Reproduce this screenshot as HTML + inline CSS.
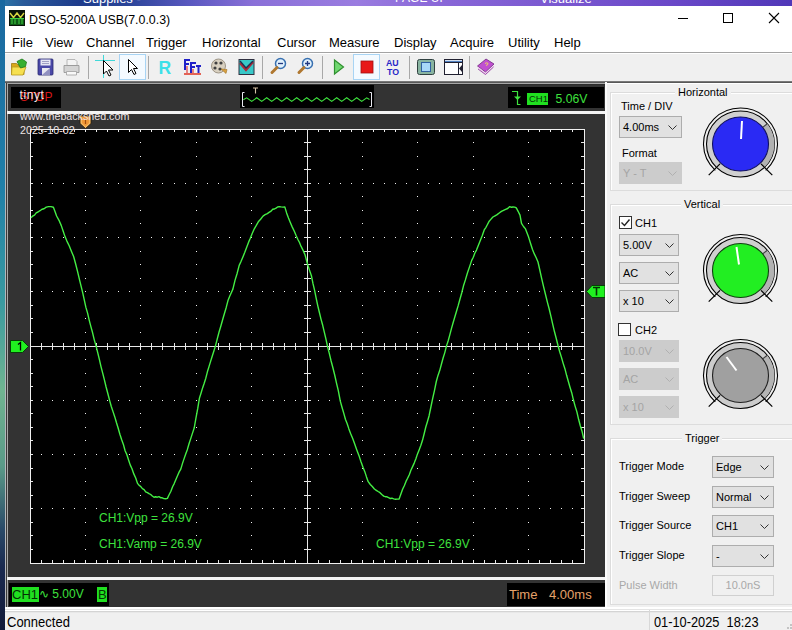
<!DOCTYPE html>
<html><head><meta charset="utf-8">
<style>
*{margin:0;padding:0;box-sizing:border-box}
html,body{width:792px;height:630px;overflow:hidden;background:#1d5f86;font-family:"Liberation Sans",sans-serif;font-size:12px;color:#000}
.a{position:absolute}
#top{left:0;top:0;width:792px;height:6px;background:linear-gradient(90deg,#2a78a8 0%,#2a5a9a 3%,#1e3c8c 10%,#2a4498 16%,#5a58c0 24%,#8a70d8 32%,#9a7ce0 45%,#8a68d8 55%,#7a58d0 70%,#6a48c8 85%,#5038b8 100%)}
#leftd{left:0;top:0;width:5px;height:630px;background:linear-gradient(180deg,#1a68a0 0%,#2080a8 30%,#3a9aa0 48%,#70b490 62%,#5a9a88 74%,#2a4a68 84%,#1a2a50 90%,#121a38 100%)}
#win{left:5px;top:6px;width:787px;height:624px;background:#fff}
.menu span{position:absolute;top:35px;font-size:13px;color:#000}
#tb{left:5px;top:52px;width:787px;height:30px;background:#f0f0f0;border-top:1px solid #a4a4a4;box-shadow:inset 0 1px 0 #fff}
#scope{left:5px;top:83px;width:600px;height:524px;background:#333333}
#rp{left:605px;top:83px;width:187px;height:525px;background:#f0f0f0;border-top:1px solid #fff}
#sb{left:5px;top:607px;width:787px;height:23px;background:#f0f0f0}
.gb{position:absolute;border:1px solid #dcdcdc;box-shadow:1px 1px 0 #fff inset}
.gl{position:absolute;background:#f0f0f0;padding:0 3px;font-size:11px;line-height:13px;color:#000}
.cb{position:absolute;background:#e1e1e1;border:1px solid #adadad;font-size:11px;color:#000;padding-left:3px;line-height:20px}
.cb.dis{background:#cccccc;border-color:#cccccc;color:#a4a4a4}
.chev{position:absolute;right:4px;top:8px;width:9px;height:5px}
.lbl{position:absolute;font-size:11px;line-height:13px;color:#000}
.g{color:#3ee23e}
</style></head><body>
<div class="a" id="top"></div>
<div class="a" id="leftd"></div>
<div class="a" id="win"></div>
<!-- desktop text peeks -->
<div class="a" style="left:83px;top:-9px;color:#fff;font-size:13px;line-height:15px">Supplies -</div>
<div class="a" style="left:395px;top:-9px;color:#fff;font-size:12px;line-height:15px">PAGE UP</div>
<div class="a" style="left:540px;top:-9px;color:#fff;font-size:13px;line-height:15px">Visualize</div>

<!-- title bar -->
<svg class="a" style="left:9px;top:10px" width="16" height="16" viewBox="0 0 16 16">
<rect x="0" y="0" width="16" height="16" fill="#0a140a"/>
<path d="M1 3 L4.5 7.5 L8 3 L11.5 7.5 L15 3" stroke="#d8d840" stroke-width="1.4" fill="none"/>
<rect x="1" y="8" width="14" height="7" fill="#0e5a16"/>
<path d="M1 8.5h14M3 9v5M6 9v5M10 9v5M13 9v5" stroke="#40d040" stroke-width="1" fill="none"/>
</svg>
<div class="a" style="left:29px;top:13px;font-size:12.4px;color:#000">DSO-5200A USB(7.0.0.3)</div>
<div class="a" style="left:678px;top:18px;width:10px;height:1px;background:#000"></div>
<div class="a" style="left:723px;top:13px;width:10px;height:10px;border:1px solid #000"></div>
<svg class="a" style="left:768px;top:12px" width="12" height="12" viewBox="0 0 12 12"><path d="M1 1L11 11M11 1L1 11" stroke="#000" stroke-width="1.1"/></svg>

<!-- menu -->
<div class="menu">
<span style="left:12px">File</span>
<span style="left:45px">View</span>
<span style="left:86px">Channel</span>
<span style="left:146px">Trigger</span>
<span style="left:202px">Horizontal</span>
<span style="left:277px">Cursor</span>
<span style="left:329px">Measure</span>
<span style="left:394px">Display</span>
<span style="left:450px">Acquire</span>
<span style="left:508px">Utility</span>
<span style="left:554px">Help</span>
</div>

<!-- toolbar -->
<div class="a" id="tb"></div>
<svg class="a" style="left:0;top:52px" width="792" height="30" viewBox="0 52 792 30">
<!-- open folder -->
<path d="M11.5 63.5h5l1.5 1.5h6v9.5h-12.5z" fill="#d8a818" stroke="#a07a10" stroke-width="0.8"/>
<path d="M12 67h14l-3 8h-11.5z" fill="#f6e050" stroke="#b89a20" stroke-width="0.8"/>
<path d="M17 61.5l5-2.5l4.5 3l-1 4.5l-5 1.5z" fill="#38b030" stroke="#1a7a18" stroke-width="0.8"/>
<!-- save -->
<rect x="38" y="59" width="15" height="16" rx="1" fill="#4a48a8" stroke="#2a2870" stroke-width="0.8"/>
<rect x="40.5" y="59.5" width="10" height="6" fill="#e6e6f4"/>
<path d="M42 61.5h7M42 63.5h7" stroke="#8080b0" stroke-width="0.7"/>
<rect x="42" y="68" width="8" height="7" fill="#e8e8f0"/>
<path d="M42 75l8-7v7z" fill="#9090c0"/>
<!-- print -->
<path d="M67 59.5h8l2 2v4h-10z" fill="#f4f4f4" stroke="#a8a8a8" stroke-width="0.8"/>
<path d="M64 65.5h15v7h-15z" fill="#d4d4d4" stroke="#909090" stroke-width="0.8"/>
<path d="M66.5 71.5h10v3.5h-10z" fill="#f8f8f8" stroke="#a0a0a0" stroke-width="0.8"/>
<!-- separator -->
<rect x="88" y="56" width="1" height="23" fill="#a8a8a8"/>
<!-- cursor crosshair -->
<path d="M95 60.5h20M103.5 55v23" stroke="#40d8d8" stroke-width="1"/>
<path d="M103.5 60.5v13.5l3-3l2.5 5l2-1l-2.5-5h4.5z" fill="#fff" stroke="#000" stroke-width="1"/>
<!-- selected pointer -->
<rect x="119.5" y="54.5" width="26" height="25" fill="#f4faff" stroke="#a8d4f4"/>
<path d="M128.5 59.5v13l3-3l2.5 5l2-1l-2.5-5h4z" fill="#fff" stroke="#000" stroke-width="1"/>
<rect x="148" y="56" width="1" height="23" fill="#a8a8a8"/>
<!-- R -->
<text x="158.5" y="73.5" font-family="Liberation Sans" font-weight="bold" font-size="17.5" fill="#3ce0e8">R</text>
<!-- FFT -->
<path d="M184 59h6v2h-4v2h3v2h-3v5h-2z" fill="#2020c8"/>
<path d="M190 62h6v2h-4v2h3v2h-3v5h-2z" fill="#2020c8"/>
<path d="M196 65h5v2h-1.5v6h-2v-6h-1.5z" fill="#2020c8"/>
<path d="M184 74h17" stroke="#e04030" stroke-width="1.6"/>
<path d="M187 66v7M193 69v4" stroke="#e04040" stroke-width="1.2"/>
<!-- reel -->
<circle cx="218.5" cy="66" r="7" fill="#d8d0c0" stroke="#8a8070" stroke-width="0.8"/>
<circle cx="216" cy="63" r="1.6" fill="#404040"/><circle cx="221" cy="63" r="1.6" fill="#404040"/><circle cx="215" cy="68" r="1.6" fill="#404040"/><circle cx="220" cy="69" r="1.6" fill="#404040"/>
<path d="M221 69l5 4.5l1-4z" fill="#d8a040" stroke="#a07020" stroke-width="0.6"/>
<!-- waveform screen -->
<rect x="239" y="59.5" width="15" height="15" fill="#38c8c8" stroke="#303040" stroke-width="1"/>
<path d="M240 63l6 7l7-8" stroke="#b02838" stroke-width="2.4" fill="none"/>
<path d="M240 61l6 7l7-7" stroke="#203050" stroke-width="1.4" fill="none"/>
<rect x="262" y="56" width="1" height="23" fill="#a8a8a8"/>
<!-- zoom out -->
<circle cx="280.5" cy="63.5" r="5" fill="#e0f0fc" stroke="#3870b0" stroke-width="1.5"/>
<path d="M278 63.5h5" stroke="#203880" stroke-width="1.3"/>
<path d="M277 67.5l-5 5" stroke="#b07830" stroke-width="3" stroke-linecap="round"/>
<circle cx="307.5" cy="63.5" r="5" fill="#e0f0fc" stroke="#3870b0" stroke-width="1.5"/>
<path d="M305 63.5h5M307.5 61v5" stroke="#203880" stroke-width="1.3"/>
<path d="M304 67.5l-5 5" stroke="#b07830" stroke-width="3" stroke-linecap="round"/>
<rect x="322" y="56" width="1" height="23" fill="#a8a8a8"/>
<!-- play -->
<path d="M334.5 60l9 7l-9 7z" fill="#70d870" stroke="#309030" stroke-width="1.2"/>
<!-- stop selected -->
<rect x="353.5" y="54.5" width="26" height="25" fill="#f4faff" stroke="#a8d4f4"/>
<rect x="361" y="61" width="12" height="12" fill="#e81818" stroke="#a01010" stroke-width="0.8"/>
<!-- AUTO -->
<text x="386" y="66" font-family="Liberation Sans" font-weight="bold" font-size="8.8" fill="#2828c8">AU</text>
<text x="387" y="74.5" font-family="Liberation Sans" font-weight="bold" font-size="8.8" fill="#2828c8">TO</text>
<rect x="409" y="56" width="1" height="23" fill="#a8a8a8"/>
<!-- fullscreen -->
<rect x="417.5" y="59.5" width="17" height="15" rx="2" fill="#88b4a0" stroke="#304040" stroke-width="1"/>
<rect x="421.5" y="62.5" width="9" height="9" fill="#a8d8f8" stroke="#3060a0" stroke-width="1"/>
<!-- panel -->
<rect x="444.5" y="59.5" width="18" height="15" fill="#fff" stroke="#202030" stroke-width="1"/>
<path d="M445 61.5h17" stroke="#5080c0" stroke-width="1.5"/>
<path d="M445 62.5h17M458.5 62.5v12" stroke="#202030" stroke-width="1"/>
<path d="M462 65l-3 3.5l3 3.5z" fill="#202030"/>
<rect x="469" y="56" width="1" height="23" fill="#a8a8a8"/>
<!-- book -->
<path d="M477.5 66l8.5-7l8 5l-8.5 8z" fill="#c050d0" stroke="#702880" stroke-width="0.8"/>
<path d="M478 67.5l7.5 6.5l8.5-8" stroke="#f0c8f0" stroke-width="1.2" fill="none"/>
<path d="M478 69l7.5 5.5l8-7.5" stroke="#8a3098" stroke-width="0.8" fill="none"/>
<path d="M485 63.5q2-1.5 3 0q0 1.5-2 2" stroke="#f0d060" stroke-width="1" fill="none"/>
</svg>

<div class="a" style="left:5px;top:81px;width:787px;height:1px;background:#787878"></div><div class="a" style="left:5px;top:82px;width:787px;height:1px;background:#585858"></div>

<!-- scope panel -->
<div class="a" id="scope"></div>
<div class="a" style="left:5px;top:83px;width:600px;height:1px;background:#a8a8a8"></div>
<div class="a" style="left:5px;top:84px;width:600px;height:1px;background:#2c2c2c"></div>
<div class="a" style="left:7px;top:83px;width:1px;height:524px;background:#a8a8a8"></div>
<div class="a" style="left:5px;top:83px;width:1px;height:525px;background:#b4b6ba"></div>
<div class="a" style="left:6px;top:83px;width:1px;height:525px;background:#3a3a3a"></div>

<!-- top black boxes -->
<div class="a" style="left:11px;top:87px;width:50px;height:21px;background:#000"></div>
<div class="a" style="left:20px;top:91px;font-size:12px;line-height:13px;color:#d81818">STOP</div>
<div class="a" style="left:19.5px;top:88px;font-size:12px;line-height:14px;color:#f4e4e4;letter-spacing:0.6px">tinyt</div>

<div class="a" style="left:240px;top:85px;width:134px;height:23px;background:#000"></div>
<svg class="a" style="left:240px;top:85px" width="134" height="23" viewBox="240 85 134 23">
<path d="M244.5 92.5h-2v14h2M369.5 92.5h2v14h-2" stroke="#e8e8f0" stroke-width="1" fill="none"/>
<path d="M243.3 99.8 L246.7 97.8 L251.7 101.4 L256.7 97.8 L261.7 101.4 L266.7 97.8 L271.7 101.4 L276.7 97.8 L281.7 101.4 L286.7 97.8 L291.7 101.4 L296.7 97.8 L301.7 101.4 L306.7 97.8 L311.7 101.4 L316.7 97.8 L321.7 101.4 L326.7 97.8 L331.7 101.4 L336.7 97.8 L341.7 101.4 L346.7 97.8 L351.7 101.4 L356.7 97.8 L361.7 101.4 L366.7 97.8 L369.5 99.5" stroke="#3ee23e" fill="none" stroke-width="1.1"/>
<path d="M253 88h5M255.5 88v5.5" stroke="#d8c4a8" stroke-width="1.1"/>
</svg>

<div class="a" style="left:508px;top:87px;width:96px;height:21px;background:#000"></div>
<svg class="a" style="left:508px;top:87px" width="20" height="21" viewBox="508 87 20 21">
<path d="M512 91.5h5.5v13h3" stroke="#3ee23e" stroke-width="1.2" fill="none"/>
<path d="M514 96.5h7l-3.5 3.5z" fill="#3ee23e"/>
</svg>
<div class="a" style="left:527px;top:93px;width:21px;height:12px;background:#20e020"></div>
<div class="a" style="left:529px;top:93px;font-size:9.5px;color:#063006;line-height:11px">CH1</div>
<div class="a g" style="left:555.5px;top:92px;font-size:12.2px;line-height:15px">5.06V</div>

<div class="a" style="left:7px;top:111px;width:598px;height:3px;background:#f4f4f4"></div>

<!-- grid -->
<div class="a" style="left:30px;top:129px;width:555px;height:435px;background:#000"></div>
<svg class="a" style="left:0;top:0" width="792" height="630" viewBox="0 0 792 630">
<path d="M85 142h1v1h-1zM85 156h1v1h-1zM85 169h1v1h-1zM85 183h1v1h-1zM85 196h1v1h-1zM85 210h1v1h-1zM85 223h1v1h-1zM85 237h1v1h-1zM85 251h1v1h-1zM85 264h1v1h-1zM85 278h1v1h-1zM85 291h1v1h-1zM85 305h1v1h-1zM85 318h1v1h-1zM85 332h1v1h-1zM85 346h1v1h-1zM85 359h1v1h-1zM85 373h1v1h-1zM85 386h1v1h-1zM85 400h1v1h-1zM85 413h1v1h-1zM85 427h1v1h-1zM85 440h1v1h-1zM85 454h1v1h-1zM85 468h1v1h-1zM85 481h1v1h-1zM85 495h1v1h-1zM85 508h1v1h-1zM85 522h1v1h-1zM85 535h1v1h-1zM85 549h1v1h-1zM140 142h1v1h-1zM140 156h1v1h-1zM140 169h1v1h-1zM140 183h1v1h-1zM140 196h1v1h-1zM140 210h1v1h-1zM140 223h1v1h-1zM140 237h1v1h-1zM140 251h1v1h-1zM140 264h1v1h-1zM140 278h1v1h-1zM140 291h1v1h-1zM140 305h1v1h-1zM140 318h1v1h-1zM140 332h1v1h-1zM140 346h1v1h-1zM140 359h1v1h-1zM140 373h1v1h-1zM140 386h1v1h-1zM140 400h1v1h-1zM140 413h1v1h-1zM140 427h1v1h-1zM140 440h1v1h-1zM140 454h1v1h-1zM140 468h1v1h-1zM140 481h1v1h-1zM140 495h1v1h-1zM140 508h1v1h-1zM140 522h1v1h-1zM140 535h1v1h-1zM140 549h1v1h-1zM196 142h1v1h-1zM196 156h1v1h-1zM196 169h1v1h-1zM196 183h1v1h-1zM196 196h1v1h-1zM196 210h1v1h-1zM196 223h1v1h-1zM196 237h1v1h-1zM196 251h1v1h-1zM196 264h1v1h-1zM196 278h1v1h-1zM196 291h1v1h-1zM196 305h1v1h-1zM196 318h1v1h-1zM196 332h1v1h-1zM196 346h1v1h-1zM196 359h1v1h-1zM196 373h1v1h-1zM196 386h1v1h-1zM196 400h1v1h-1zM196 413h1v1h-1zM196 427h1v1h-1zM196 440h1v1h-1zM196 454h1v1h-1zM196 468h1v1h-1zM196 481h1v1h-1zM196 495h1v1h-1zM196 508h1v1h-1zM196 522h1v1h-1zM196 535h1v1h-1zM196 549h1v1h-1zM251 142h1v1h-1zM251 156h1v1h-1zM251 169h1v1h-1zM251 183h1v1h-1zM251 196h1v1h-1zM251 210h1v1h-1zM251 223h1v1h-1zM251 237h1v1h-1zM251 251h1v1h-1zM251 264h1v1h-1zM251 278h1v1h-1zM251 291h1v1h-1zM251 305h1v1h-1zM251 318h1v1h-1zM251 332h1v1h-1zM251 346h1v1h-1zM251 359h1v1h-1zM251 373h1v1h-1zM251 386h1v1h-1zM251 400h1v1h-1zM251 413h1v1h-1zM251 427h1v1h-1zM251 440h1v1h-1zM251 454h1v1h-1zM251 468h1v1h-1zM251 481h1v1h-1zM251 495h1v1h-1zM251 508h1v1h-1zM251 522h1v1h-1zM251 535h1v1h-1zM251 549h1v1h-1zM362 142h1v1h-1zM362 156h1v1h-1zM362 169h1v1h-1zM362 183h1v1h-1zM362 196h1v1h-1zM362 210h1v1h-1zM362 223h1v1h-1zM362 237h1v1h-1zM362 251h1v1h-1zM362 264h1v1h-1zM362 278h1v1h-1zM362 291h1v1h-1zM362 305h1v1h-1zM362 318h1v1h-1zM362 332h1v1h-1zM362 346h1v1h-1zM362 359h1v1h-1zM362 373h1v1h-1zM362 386h1v1h-1zM362 400h1v1h-1zM362 413h1v1h-1zM362 427h1v1h-1zM362 440h1v1h-1zM362 454h1v1h-1zM362 468h1v1h-1zM362 481h1v1h-1zM362 495h1v1h-1zM362 508h1v1h-1zM362 522h1v1h-1zM362 535h1v1h-1zM362 549h1v1h-1zM417 142h1v1h-1zM417 156h1v1h-1zM417 169h1v1h-1zM417 183h1v1h-1zM417 196h1v1h-1zM417 210h1v1h-1zM417 223h1v1h-1zM417 237h1v1h-1zM417 251h1v1h-1zM417 264h1v1h-1zM417 278h1v1h-1zM417 291h1v1h-1zM417 305h1v1h-1zM417 318h1v1h-1zM417 332h1v1h-1zM417 346h1v1h-1zM417 359h1v1h-1zM417 373h1v1h-1zM417 386h1v1h-1zM417 400h1v1h-1zM417 413h1v1h-1zM417 427h1v1h-1zM417 440h1v1h-1zM417 454h1v1h-1zM417 468h1v1h-1zM417 481h1v1h-1zM417 495h1v1h-1zM417 508h1v1h-1zM417 522h1v1h-1zM417 535h1v1h-1zM417 549h1v1h-1zM473 142h1v1h-1zM473 156h1v1h-1zM473 169h1v1h-1zM473 183h1v1h-1zM473 196h1v1h-1zM473 210h1v1h-1zM473 223h1v1h-1zM473 237h1v1h-1zM473 251h1v1h-1zM473 264h1v1h-1zM473 278h1v1h-1zM473 291h1v1h-1zM473 305h1v1h-1zM473 318h1v1h-1zM473 332h1v1h-1zM473 346h1v1h-1zM473 359h1v1h-1zM473 373h1v1h-1zM473 386h1v1h-1zM473 400h1v1h-1zM473 413h1v1h-1zM473 427h1v1h-1zM473 440h1v1h-1zM473 454h1v1h-1zM473 468h1v1h-1zM473 481h1v1h-1zM473 495h1v1h-1zM473 508h1v1h-1zM473 522h1v1h-1zM473 535h1v1h-1zM473 549h1v1h-1zM528 142h1v1h-1zM528 156h1v1h-1zM528 169h1v1h-1zM528 183h1v1h-1zM528 196h1v1h-1zM528 210h1v1h-1zM528 223h1v1h-1zM528 237h1v1h-1zM528 251h1v1h-1zM528 264h1v1h-1zM528 278h1v1h-1zM528 291h1v1h-1zM528 305h1v1h-1zM528 318h1v1h-1zM528 332h1v1h-1zM528 346h1v1h-1zM528 359h1v1h-1zM528 373h1v1h-1zM528 386h1v1h-1zM528 400h1v1h-1zM528 413h1v1h-1zM528 427h1v1h-1zM528 440h1v1h-1zM528 454h1v1h-1zM528 468h1v1h-1zM528 481h1v1h-1zM528 495h1v1h-1zM528 508h1v1h-1zM528 522h1v1h-1zM528 535h1v1h-1zM528 549h1v1h-1zM41 183h1v1h-1zM52 183h1v1h-1zM63 183h1v1h-1zM74 183h1v1h-1zM85 183h1v1h-1zM96 183h1v1h-1zM107 183h1v1h-1zM118 183h1v1h-1zM129 183h1v1h-1zM140 183h1v1h-1zM151 183h1v1h-1zM162 183h1v1h-1zM174 183h1v1h-1zM185 183h1v1h-1zM196 183h1v1h-1zM207 183h1v1h-1zM218 183h1v1h-1zM229 183h1v1h-1zM240 183h1v1h-1zM251 183h1v1h-1zM262 183h1v1h-1zM273 183h1v1h-1zM284 183h1v1h-1zM295 183h1v1h-1zM307 183h1v1h-1zM318 183h1v1h-1zM329 183h1v1h-1zM340 183h1v1h-1zM351 183h1v1h-1zM362 183h1v1h-1zM373 183h1v1h-1zM384 183h1v1h-1zM395 183h1v1h-1zM406 183h1v1h-1zM417 183h1v1h-1zM428 183h1v1h-1zM439 183h1v1h-1zM451 183h1v1h-1zM462 183h1v1h-1zM473 183h1v1h-1zM484 183h1v1h-1zM495 183h1v1h-1zM506 183h1v1h-1zM517 183h1v1h-1zM528 183h1v1h-1zM539 183h1v1h-1zM550 183h1v1h-1zM561 183h1v1h-1zM572 183h1v1h-1zM41 237h1v1h-1zM52 237h1v1h-1zM63 237h1v1h-1zM74 237h1v1h-1zM85 237h1v1h-1zM96 237h1v1h-1zM107 237h1v1h-1zM118 237h1v1h-1zM129 237h1v1h-1zM140 237h1v1h-1zM151 237h1v1h-1zM162 237h1v1h-1zM174 237h1v1h-1zM185 237h1v1h-1zM196 237h1v1h-1zM207 237h1v1h-1zM218 237h1v1h-1zM229 237h1v1h-1zM240 237h1v1h-1zM251 237h1v1h-1zM262 237h1v1h-1zM273 237h1v1h-1zM284 237h1v1h-1zM295 237h1v1h-1zM307 237h1v1h-1zM318 237h1v1h-1zM329 237h1v1h-1zM340 237h1v1h-1zM351 237h1v1h-1zM362 237h1v1h-1zM373 237h1v1h-1zM384 237h1v1h-1zM395 237h1v1h-1zM406 237h1v1h-1zM417 237h1v1h-1zM428 237h1v1h-1zM439 237h1v1h-1zM451 237h1v1h-1zM462 237h1v1h-1zM473 237h1v1h-1zM484 237h1v1h-1zM495 237h1v1h-1zM506 237h1v1h-1zM517 237h1v1h-1zM528 237h1v1h-1zM539 237h1v1h-1zM550 237h1v1h-1zM561 237h1v1h-1zM572 237h1v1h-1zM41 291h1v1h-1zM52 291h1v1h-1zM63 291h1v1h-1zM74 291h1v1h-1zM85 291h1v1h-1zM96 291h1v1h-1zM107 291h1v1h-1zM118 291h1v1h-1zM129 291h1v1h-1zM140 291h1v1h-1zM151 291h1v1h-1zM162 291h1v1h-1zM174 291h1v1h-1zM185 291h1v1h-1zM196 291h1v1h-1zM207 291h1v1h-1zM218 291h1v1h-1zM229 291h1v1h-1zM240 291h1v1h-1zM251 291h1v1h-1zM262 291h1v1h-1zM273 291h1v1h-1zM284 291h1v1h-1zM295 291h1v1h-1zM307 291h1v1h-1zM318 291h1v1h-1zM329 291h1v1h-1zM340 291h1v1h-1zM351 291h1v1h-1zM362 291h1v1h-1zM373 291h1v1h-1zM384 291h1v1h-1zM395 291h1v1h-1zM406 291h1v1h-1zM417 291h1v1h-1zM428 291h1v1h-1zM439 291h1v1h-1zM451 291h1v1h-1zM462 291h1v1h-1zM473 291h1v1h-1zM484 291h1v1h-1zM495 291h1v1h-1zM506 291h1v1h-1zM517 291h1v1h-1zM528 291h1v1h-1zM539 291h1v1h-1zM550 291h1v1h-1zM561 291h1v1h-1zM572 291h1v1h-1zM41 400h1v1h-1zM52 400h1v1h-1zM63 400h1v1h-1zM74 400h1v1h-1zM85 400h1v1h-1zM96 400h1v1h-1zM107 400h1v1h-1zM118 400h1v1h-1zM129 400h1v1h-1zM140 400h1v1h-1zM151 400h1v1h-1zM162 400h1v1h-1zM174 400h1v1h-1zM185 400h1v1h-1zM196 400h1v1h-1zM207 400h1v1h-1zM218 400h1v1h-1zM229 400h1v1h-1zM240 400h1v1h-1zM251 400h1v1h-1zM262 400h1v1h-1zM273 400h1v1h-1zM284 400h1v1h-1zM295 400h1v1h-1zM307 400h1v1h-1zM318 400h1v1h-1zM329 400h1v1h-1zM340 400h1v1h-1zM351 400h1v1h-1zM362 400h1v1h-1zM373 400h1v1h-1zM384 400h1v1h-1zM395 400h1v1h-1zM406 400h1v1h-1zM417 400h1v1h-1zM428 400h1v1h-1zM439 400h1v1h-1zM451 400h1v1h-1zM462 400h1v1h-1zM473 400h1v1h-1zM484 400h1v1h-1zM495 400h1v1h-1zM506 400h1v1h-1zM517 400h1v1h-1zM528 400h1v1h-1zM539 400h1v1h-1zM550 400h1v1h-1zM561 400h1v1h-1zM572 400h1v1h-1zM41 454h1v1h-1zM52 454h1v1h-1zM63 454h1v1h-1zM74 454h1v1h-1zM85 454h1v1h-1zM96 454h1v1h-1zM107 454h1v1h-1zM118 454h1v1h-1zM129 454h1v1h-1zM140 454h1v1h-1zM151 454h1v1h-1zM162 454h1v1h-1zM174 454h1v1h-1zM185 454h1v1h-1zM196 454h1v1h-1zM207 454h1v1h-1zM218 454h1v1h-1zM229 454h1v1h-1zM240 454h1v1h-1zM251 454h1v1h-1zM262 454h1v1h-1zM273 454h1v1h-1zM284 454h1v1h-1zM295 454h1v1h-1zM307 454h1v1h-1zM318 454h1v1h-1zM329 454h1v1h-1zM340 454h1v1h-1zM351 454h1v1h-1zM362 454h1v1h-1zM373 454h1v1h-1zM384 454h1v1h-1zM395 454h1v1h-1zM406 454h1v1h-1zM417 454h1v1h-1zM428 454h1v1h-1zM439 454h1v1h-1zM451 454h1v1h-1zM462 454h1v1h-1zM473 454h1v1h-1zM484 454h1v1h-1zM495 454h1v1h-1zM506 454h1v1h-1zM517 454h1v1h-1zM528 454h1v1h-1zM539 454h1v1h-1zM550 454h1v1h-1zM561 454h1v1h-1zM572 454h1v1h-1zM41 508h1v1h-1zM52 508h1v1h-1zM63 508h1v1h-1zM74 508h1v1h-1zM85 508h1v1h-1zM96 508h1v1h-1zM107 508h1v1h-1zM118 508h1v1h-1zM129 508h1v1h-1zM140 508h1v1h-1zM151 508h1v1h-1zM162 508h1v1h-1zM174 508h1v1h-1zM185 508h1v1h-1zM196 508h1v1h-1zM207 508h1v1h-1zM218 508h1v1h-1zM229 508h1v1h-1zM240 508h1v1h-1zM251 508h1v1h-1zM262 508h1v1h-1zM273 508h1v1h-1zM284 508h1v1h-1zM295 508h1v1h-1zM307 508h1v1h-1zM318 508h1v1h-1zM329 508h1v1h-1zM340 508h1v1h-1zM351 508h1v1h-1zM362 508h1v1h-1zM373 508h1v1h-1zM384 508h1v1h-1zM395 508h1v1h-1zM406 508h1v1h-1zM417 508h1v1h-1zM428 508h1v1h-1zM439 508h1v1h-1zM451 508h1v1h-1zM462 508h1v1h-1zM473 508h1v1h-1zM484 508h1v1h-1zM495 508h1v1h-1zM506 508h1v1h-1zM517 508h1v1h-1zM528 508h1v1h-1zM539 508h1v1h-1zM550 508h1v1h-1zM561 508h1v1h-1zM572 508h1v1h-1z" fill="#f0f0f0"/>
<path d="M41.5 129v3M41.5 563v-3M41.5 343v7M52.5 129v3M52.5 563v-3M52.5 343v7M63.5 129v3M63.5 563v-3M63.5 343v7M74.5 129v3M74.5 563v-3M74.5 343v7M85.5 129v3M85.5 563v-3M85.5 343v7M96.5 129v3M96.5 563v-3M96.5 343v7M107.5 129v3M107.5 563v-3M107.5 343v7M118.5 129v3M118.5 563v-3M118.5 343v7M129.5 129v3M129.5 563v-3M129.5 343v7M140.5 129v3M140.5 563v-3M140.5 343v7M151.5 129v3M151.5 563v-3M151.5 343v7M162.5 129v3M162.5 563v-3M162.5 343v7M174.5 129v3M174.5 563v-3M174.5 343v7M185.5 129v3M185.5 563v-3M185.5 343v7M196.5 129v3M196.5 563v-3M196.5 343v7M207.5 129v3M207.5 563v-3M207.5 343v7M218.5 129v3M218.5 563v-3M218.5 343v7M229.5 129v3M229.5 563v-3M229.5 343v7M240.5 129v3M240.5 563v-3M240.5 343v7M251.5 129v3M251.5 563v-3M251.5 343v7M262.5 129v3M262.5 563v-3M262.5 343v7M273.5 129v3M273.5 563v-3M273.5 343v7M284.5 129v3M284.5 563v-3M284.5 343v7M295.5 129v3M295.5 563v-3M295.5 343v7M307.5 129v3M307.5 563v-3M307.5 343v7M318.5 129v3M318.5 563v-3M318.5 343v7M329.5 129v3M329.5 563v-3M329.5 343v7M340.5 129v3M340.5 563v-3M340.5 343v7M351.5 129v3M351.5 563v-3M351.5 343v7M362.5 129v3M362.5 563v-3M362.5 343v7M373.5 129v3M373.5 563v-3M373.5 343v7M384.5 129v3M384.5 563v-3M384.5 343v7M395.5 129v3M395.5 563v-3M395.5 343v7M406.5 129v3M406.5 563v-3M406.5 343v7M417.5 129v3M417.5 563v-3M417.5 343v7M428.5 129v3M428.5 563v-3M428.5 343v7M439.5 129v3M439.5 563v-3M439.5 343v7M451.5 129v3M451.5 563v-3M451.5 343v7M462.5 129v3M462.5 563v-3M462.5 343v7M473.5 129v3M473.5 563v-3M473.5 343v7M484.5 129v3M484.5 563v-3M484.5 343v7M495.5 129v3M495.5 563v-3M495.5 343v7M506.5 129v3M506.5 563v-3M506.5 343v7M517.5 129v3M517.5 563v-3M517.5 343v7M528.5 129v3M528.5 563v-3M528.5 343v7M539.5 129v3M539.5 563v-3M539.5 343v7M550.5 129v3M550.5 563v-3M550.5 343v7M561.5 129v3M561.5 563v-3M561.5 343v7M572.5 129v3M572.5 563v-3M572.5 343v7M30 142.5h3M584 142.5h-3M304 142.5h7M30 156.5h3M584 156.5h-3M304 156.5h7M30 169.5h3M584 169.5h-3M304 169.5h7M30 183.5h3M584 183.5h-3M304 183.5h7M30 196.5h3M584 196.5h-3M304 196.5h7M30 210.5h3M584 210.5h-3M304 210.5h7M30 223.5h3M584 223.5h-3M304 223.5h7M30 237.5h3M584 237.5h-3M304 237.5h7M30 251.5h3M584 251.5h-3M304 251.5h7M30 264.5h3M584 264.5h-3M304 264.5h7M30 278.5h3M584 278.5h-3M304 278.5h7M30 291.5h3M584 291.5h-3M304 291.5h7M30 305.5h3M584 305.5h-3M304 305.5h7M30 318.5h3M584 318.5h-3M304 318.5h7M30 332.5h3M584 332.5h-3M304 332.5h7M30 346.5h3M584 346.5h-3M304 346.5h7M30 359.5h3M584 359.5h-3M304 359.5h7M30 373.5h3M584 373.5h-3M304 373.5h7M30 386.5h3M584 386.5h-3M304 386.5h7M30 400.5h3M584 400.5h-3M304 400.5h7M30 413.5h3M584 413.5h-3M304 413.5h7M30 427.5h3M584 427.5h-3M304 427.5h7M30 440.5h3M584 440.5h-3M304 440.5h7M30 454.5h3M584 454.5h-3M304 454.5h7M30 468.5h3M584 468.5h-3M304 468.5h7M30 481.5h3M584 481.5h-3M304 481.5h7M30 495.5h3M584 495.5h-3M304 495.5h7M30 508.5h3M584 508.5h-3M304 508.5h7M30 522.5h3M584 522.5h-3M304 522.5h7M30 535.5h3M584 535.5h-3M304 535.5h7M30 549.5h3M584 549.5h-3M304 549.5h7" stroke="#e8e8e8" stroke-width="1" fill="none"/>
<rect x="30.5" y="129.5" width="554" height="434" fill="none" stroke="#f0f0f0" stroke-width="1"/>
<path d="M307.5 129V563M30 346.5H584" stroke="#e8e8e8" stroke-width="1"/>
<path d="M31.0 217.8 L32.8 216.0 L34.5 215.2 L36.2 212.9 L38.0 212.0 L40.0 210.7 L42.0 209.2 L44.0 208.7 L46.3 207.1 L48.6 206.6 L51.0 206.6 L53.4 207.2 L55.0 211.6 L56.6 216.0 L59.0 220.3 L61.3 225.6 L63.2 231.2 L65.0 236.6 L66.9 241.1 L69.3 246.0 L71.7 251.9 L73.7 256.7 L75.6 263.8 L77.6 271.7 L79.6 280.2 L81.2 286.6 L82.8 293.2 L85.9 307.4 L87.6 313.1 L89.2 320.1 L90.9 326.7 L92.6 332.8 L94.2 339.6 L95.9 345.4 L97.6 352.2 L99.3 359.2 L101.0 366.6 L102.7 373.1 L104.4 379.8 L106.1 387.0 L107.9 393.7 L109.6 400.3 L111.3 406.5 L113.1 411.9 L114.8 416.9 L116.5 422.8 L118.2 428.2 L119.9 434.2 L121.6 439.5 L123.4 444.4 L125.1 450.8 L126.8 454.5 L128.5 459.7 L130.2 464.9 L132.0 468.8 L133.8 473.9 L135.7 478.0 L137.5 483.4 L139.1 485.2 L140.8 486.6 L142.4 488.7 L144.1 489.6 L145.7 491.8 L147.4 492.6 L149.0 493.6 L150.7 494.5 L152.3 496.0 L154.0 497.2 L155.6 496.8 L157.3 497.2 L158.9 496.6 L160.6 497.7 L162.2 497.8 L163.9 498.6 L165.7 498.8 L167.4 498.4 L169.1 494.8 L170.9 491.3 L172.6 486.7 L174.2 483.6 L175.9 479.5 L177.5 475.7 L179.2 471.9 L180.8 469.1 L182.5 463.4 L184.1 458.6 L185.8 453.8 L187.4 449.4 L189.1 443.5 L190.8 438.4 L192.5 433.1 L194.2 428.0 L195.9 418.3 L197.7 408.7 L199.4 398.3 L201.0 393.2 L202.6 387.9 L204.2 383.3 L205.8 378.2 L207.4 371.8 L209.0 366.6 L210.6 361.4 L212.2 356.2 L213.8 351.2 L215.4 346.1 L217.2 339.1 L219.0 332.2 L220.8 326.2 L222.7 319.5 L224.5 313.2 L226.3 307.2 L228.1 300.2 L229.7 296.3 L231.3 292.8 L232.9 289.1 L235.0 280.4 L237.1 273.5 L239.2 265.4 L241.1 261.3 L242.9 257.0 L244.8 252.3 L246.6 247.5 L248.5 242.4 L250.3 238.3 L252.3 233.2 L254.3 228.8 L256.3 225.4 L258.3 221.8 L260.6 219.2 L263.0 216.1 L265.1 214.7 L267.3 213.6 L269.4 212.2 L271.1 211.1 L272.7 209.3 L274.4 209.0 L276.0 208.1 L277.6 207.0 L279.2 206.6 L281.1 206.9 L282.9 207.1 L284.8 206.9 L286.6 212.9 L288.5 218.1 L290.3 222.5 L292.3 227.1 L294.3 231.3 L296.3 236.0 L297.9 239.5 L299.5 242.5 L301.1 246.4 L303.1 250.4 L305.1 255.0 L307.5 264.1 L309.4 269.9 L311.4 275.7 L313.0 283.7 L314.6 290.4 L316.2 298.4 L317.8 305.8 L319.4 312.5 L321.0 319.1 L322.7 325.3 L324.3 332.2 L325.9 338.8 L327.5 346.4 L329.3 353.4 L331.1 361.0 L332.9 367.8 L334.7 375.0 L336.5 383.1 L338.3 390.6 L340.3 401.1 L342.0 407.2 L343.8 413.4 L345.5 419.5 L347.2 423.7 L348.9 428.9 L350.6 433.5 L352.7 438.6 L354.7 444.1 L356.8 449.9 L358.9 455.4 L360.9 461.5 L363.0 467.3 L364.7 471.4 L366.5 476.9 L368.2 481.7 L370.3 484.5 L372.3 486.5 L374.4 489.0 L376.3 490.3 L378.1 491.5 L380.0 492.7 L381.8 494.5 L383.7 496.1 L385.3 496.7 L387.0 496.8 L388.6 497.7 L390.3 498.5 L391.9 498.2 L393.7 498.9 L395.5 499.2 L397.3 499.1 L399.1 499.0 L400.8 494.2 L402.6 489.3 L404.3 485.7 L406.0 481.4 L407.6 478.3 L409.3 474.8 L410.9 470.3 L412.6 466.6 L414.2 463.1 L415.9 458.7 L417.5 453.9 L419.2 449.7 L420.8 445.5 L422.5 440.3 L424.1 434.0 L425.8 427.0 L427.4 421.7 L429.1 415.7 L430.9 407.0 L432.7 398.4 L434.5 390.3 L436.3 381.5 L438.0 375.4 L439.7 370.6 L441.4 364.2 L443.1 358.0 L444.8 352.6 L446.5 345.9 L448.2 340.7 L449.8 334.9 L451.5 328.4 L453.1 322.7 L454.8 317.0 L456.5 311.2 L458.1 305.9 L459.8 299.7 L461.7 293.0 L463.5 285.8 L465.4 279.9 L467.5 272.8 L469.6 266.6 L471.7 260.4 L473.3 257.3 L474.9 253.0 L476.5 250.1 L478.1 246.0 L480.2 240.8 L482.3 235.5 L484.4 229.6 L486.0 227.3 L487.6 224.2 L489.2 221.2 L490.8 219.4 L492.9 217.0 L495.0 215.8 L497.1 214.6 L499.2 213.0 L501.4 211.4 L503.5 210.3 L505.6 209.3 L507.7 208.5 L509.8 206.6 L511.4 207.3 L513.0 207.0 L514.7 207.1 L516.3 207.9 L518.1 211.3 L520.0 215.1 L521.5 223.3 L523.5 226.5 L525.5 228.9 L528.6 237.1 L530.5 243.3 L532.5 249.5 L534.3 253.9 L536.2 257.8 L538.0 262.0 L539.8 270.0 L541.7 278.6 L543.5 286.3 L545.5 294.5 L547.5 302.6 L549.2 309.0 L551.0 316.7 L552.8 324.6 L554.5 331.8 L556.2 338.2 L558.0 345.5 L559.7 351.7 L561.4 357.1 L563.1 363.1 L564.9 368.7 L566.6 375.3 L568.3 381.3 L570.0 387.2 L571.7 392.7 L573.4 399.8 L575.1 406.1 L576.9 411.9 L578.6 419.3 L580.3 425.8 L582.0 431.2 L583.7 438.6" stroke="#44ee44" stroke-width="1.4" fill="none" stroke-linejoin="round"/>
</svg>

<svg class="a" style="left:79px;top:115px" width="13" height="14" viewBox="0 0 13 14"><path d="M1 1h11v7.5l-5.5 5l-5.5-5z" fill="#f4b860" stroke="#2a1a08" stroke-width="0.8"/><path d="M3 2h7v6l-3.5 3.5l-3.5-3.5z" fill="#f09838"/><path d="M6.5 4v5" stroke="#a05010" stroke-width="1.2"/></svg>
<div class="a" style="left:20px;top:110px;font-size:10.7px;color:#eee4e4">www.thebackshed.com</div>
<div class="a" style="left:20px;top:124px;font-size:10.7px;color:#eee4e4">2025-10-02</div>


<svg class="a" style="left:10px;top:340px" width="20" height="13" viewBox="0 0 20 13"><path d="M0.5 0.5h12l6 6l-6 6h-12z" fill="#20f020" stroke="#064006"/><path d="M10.5 10.5v-8l-2.5 2" stroke="#000" stroke-width="1.3" fill="none"/></svg>
<svg class="a" style="left:586px;top:285px" width="19" height="13" viewBox="0 0 19 13"><path d="M19 0.5h-13l-5.5 6l5.5 6h13z" fill="#20f020" stroke="#064006"/><path d="M7 2.5h7M10.5 2.5v8" stroke="#053005" stroke-width="1.6" fill="none"/></svg>

<div class="a g" style="left:99px;top:510.5px;font-size:12px">CH1:Vpp = 26.9V</div>
<div class="a g" style="left:99px;top:536.5px;font-size:12px">CH1:Vamp = 26.9V</div>
<div class="a g" style="left:376px;top:536.5px;font-size:12px">CH1:Vpp = 26.9V</div>

<div class="a" style="left:7px;top:577px;width:598px;height:3px;background:#f4f4f4"></div>
<div class="a" style="left:9px;top:583px;width:100px;height:23px;background:#000"></div>
<div class="a" style="left:12px;top:587px;width:27px;height:15px;background:#20e020"></div>
<div class="a" style="left:12px;top:587px;font-size:13px;color:#053005;line-height:15px">CH1</div>
<div class="a g" style="left:39px;top:587px;font-size:12px;line-height:15px">∿ 5.00V</div>
<div class="a" style="left:97px;top:587px;width:10px;height:15px;background:#20e020"></div>
<div class="a" style="left:98px;top:587px;font-size:13px;color:#053005;line-height:15px">B</div>
<div class="a" style="left:507px;top:583px;width:98px;height:23px;background:#000"></div>
<div class="a" style="left:509px;top:587px;font-size:13px;color:#e6a26a;line-height:15px">Time</div>
<div class="a" style="left:549px;top:587px;font-size:13px;color:#e6a26a;line-height:15px">4.00ms</div>

<!-- right panel -->
<div class="a" id="rp"></div>
<div class="a" style="left:605px;top:82px;width:2px;height:526px;background:#fcfcfc"></div>
<div class="gb" style="left:610px;top:92px;width:190px;height:99px"></div>
<div class="gl" style="left:675px;top:86px">Horizontal</div>
<div class="lbl" style="left:621px;top:100px">Time / DIV</div>
<div class="cb" style="left:619px;top:116px;width:63px;height:22px">4.00ms<svg class="chev" viewBox="0 0 9 5"><path d="M0.5 0.5l4 4l4-4" stroke="#333" fill="none"/></svg></div>
<div class="lbl" style="left:622px;top:147px">Format</div>
<div class="cb dis" style="left:619px;top:162px;width:63px;height:22px">Y - T<svg class="chev" viewBox="0 0 9 5"><path d="M0.5 0.5l4 4l4-4" stroke="#b0b0b0" fill="none"/></svg></div>

<div class="gb" style="left:610px;top:204px;width:190px;height:221px"></div>
<div class="gl" style="left:681px;top:198px">Vertical</div>
<div class="a" style="left:619px;top:216px;width:13px;height:13px;border:1px solid #333;background:#fff"></div>
<svg class="a" style="left:619px;top:216px" width="13" height="13" viewBox="0 0 13 13"><path d="M2.5 6.5l3 3l5-6" stroke="#222" stroke-width="1.4" fill="none"/></svg>
<div class="lbl" style="left:635px;top:217px">CH1</div>
<div class="cb" style="left:619px;top:234px;width:60px;height:22px">5.00V<svg class="chev" viewBox="0 0 9 5"><path d="M0.5 0.5l4 4l4-4" stroke="#333" fill="none"/></svg></div>
<div class="cb" style="left:619px;top:262px;width:60px;height:22px">AC<svg class="chev" viewBox="0 0 9 5"><path d="M0.5 0.5l4 4l4-4" stroke="#333" fill="none"/></svg></div>
<div class="cb" style="left:619px;top:290px;width:60px;height:22px">x 10<svg class="chev" viewBox="0 0 9 5"><path d="M0.5 0.5l4 4l4-4" stroke="#333" fill="none"/></svg></div>
<div class="a" style="left:618px;top:323px;width:13px;height:13px;border:1px solid #333;background:#fff"></div>
<div class="lbl" style="left:635px;top:324px">CH2</div>
<div class="cb dis" style="left:619px;top:340px;width:60px;height:22px">10.0V<svg class="chev" viewBox="0 0 9 5"><path d="M0.5 0.5l4 4l4-4" stroke="#b0b0b0" fill="none"/></svg></div>
<div class="cb dis" style="left:619px;top:368px;width:60px;height:22px">AC<svg class="chev" viewBox="0 0 9 5"><path d="M0.5 0.5l4 4l4-4" stroke="#b0b0b0" fill="none"/></svg></div>
<div class="cb dis" style="left:619px;top:396px;width:60px;height:22px">x 10<svg class="chev" viewBox="0 0 9 5"><path d="M0.5 0.5l4 4l4-4" stroke="#b0b0b0" fill="none"/></svg></div>

<div class="gb" style="left:610px;top:438px;width:190px;height:167px"></div>
<div class="gl" style="left:682px;top:432px">Trigger</div>
<div class="lbl" style="left:619px;top:460px">Trigger Mode</div>
<div class="lbl" style="left:619px;top:490px">Trigger Sweep</div>
<div class="lbl" style="left:619px;top:519px">Trigger Source</div>
<div class="lbl" style="left:619px;top:549px">Trigger Slope</div>
<div class="lbl" style="left:619px;top:579px;color:#a8a8a8">Pulse Width</div>
<div class="cb" style="left:712px;top:456px;width:62px;height:22px">Edge<svg class="chev" viewBox="0 0 9 5"><path d="M0.5 0.5l4 4l4-4" stroke="#333" fill="none"/></svg></div>
<div class="cb" style="left:712px;top:486px;width:62px;height:22px">Normal<svg class="chev" viewBox="0 0 9 5"><path d="M0.5 0.5l4 4l4-4" stroke="#333" fill="none"/></svg></div>
<div class="cb" style="left:712px;top:515px;width:62px;height:22px">CH1<svg class="chev" viewBox="0 0 9 5"><path d="M0.5 0.5l4 4l4-4" stroke="#333" fill="none"/></svg></div>
<div class="cb" style="left:712px;top:545px;width:62px;height:22px">-<svg class="chev" viewBox="0 0 9 5"><path d="M0.5 0.5l4 4l4-4" stroke="#333" fill="none"/></svg></div>
<div class="a" style="left:712px;top:575px;width:62px;height:21px;border:1px solid #d0d0d0;background:#f0f0f0;color:#a8a8a8;text-align:center;line-height:19px;font-size:11px">10.0nS</div>

<svg class="a" style="left:0;top:0" width="792" height="630" viewBox="0 0 792 630"><g>
<path d="M715.3 170.3 A37 36 0 1 1 765.7 170.3" fill="none" stroke="#000" stroke-width="1.1"/>
<ellipse cx="740.5" cy="144" rx="34" ry="33" fill="#d0d0d0" stroke="#000" stroke-width="1.1"/>
<path d="M767.3 123.7 A34 33 0 0 1 764.5 167.3 L760.3 163.1 A28 27 0 0 0 762.6 127.4z" fill="#b2b2b2"/>
<path d="M762.6 127.4L767.3 123.7" stroke="#404040" stroke-width="1.2"/>
<ellipse cx="740.5" cy="144" rx="28" ry="27" fill="#2a2af4" stroke="#101060" stroke-width="1.1"/>
<path d="M720.0 163.8L708.7 175.1M761.0 163.8L772.3 175.1" stroke="#000" stroke-width="1.2"/>
<line x1="742" y1="121" x2="741" y2="139" stroke="#fff" stroke-width="2"/>
</g><g>
<path d="M715.3 296.8 A37 36 0 1 1 765.7 296.8" fill="none" stroke="#000" stroke-width="1.1"/>
<ellipse cx="740.5" cy="270.5" rx="34" ry="33" fill="#d0d0d0" stroke="#000" stroke-width="1.1"/>
<path d="M767.3 250.2 A34 33 0 0 1 764.5 293.8 L760.3 289.6 A28 27 0 0 0 762.6 253.9z" fill="#b2b2b2"/>
<path d="M762.6 253.9L767.3 250.2" stroke="#404040" stroke-width="1.2"/>
<ellipse cx="740.5" cy="270.5" rx="28" ry="27" fill="#22ee22" stroke="#104010" stroke-width="1.1"/>
<path d="M720.0 290.3L708.7 301.6M761.0 290.3L772.3 301.6" stroke="#000" stroke-width="1.2"/>
<line x1="736.5" y1="247" x2="739" y2="264.5" stroke="#fff" stroke-width="2"/>
</g><g>
<path d="M715.3 401.8 A37 36 0 1 1 765.7 401.8" fill="none" stroke="#000" stroke-width="1.1"/>
<ellipse cx="740.5" cy="375.5" rx="34" ry="33" fill="#cccccc" stroke="#000" stroke-width="1.1"/>
<path d="M767.3 355.2 A34 33 0 0 1 764.5 398.8 L760.3 394.6 A28 27 0 0 0 762.6 358.9z" fill="#b4b4b4"/>
<path d="M762.6 358.9L767.3 355.2" stroke="#404040" stroke-width="1.2"/>
<ellipse cx="740.5" cy="375.5" rx="28" ry="27" fill="#a0a0a0" stroke="#202020" stroke-width="1.1"/>
<path d="M720.0 395.3L708.7 406.6M761.0 395.3L772.3 406.6" stroke="#000" stroke-width="1.2"/>
<line x1="726.5" y1="357" x2="736.5" y2="370.5" stroke="#fff" stroke-width="2"/>
</g></svg>

<!-- status bar -->
<div class="a" id="sb"></div>
<div class="a" style="left:5px;top:607px;width:787px;height:2px;background:#fff"></div>
<div class="a" style="left:5px;top:609px;width:787px;height:1px;background:#e4e4e4"></div>
<div class="a" style="left:5px;top:610px;width:787px;height:1px;background:#fff"></div>
<div class="a" style="left:5px;top:611px;width:787px;height:1px;background:#d4d4d4"></div>
<div class="a" style="left:5px;top:612px;width:787px;height:1px;background:#e8e8e8"></div>
<div class="a" style="left:7px;top:615px;font-size:13px;transform:scaleY(1.1);transform-origin:0 100%">Connected</div>
<div class="a" style="left:649px;top:610px;width:1px;height:20px;background:#d8d8d8"></div>
<div class="a" style="left:654px;top:615px;font-size:12.8px;transform:scaleY(1.12);transform-origin:0 100%">01-10-2025&nbsp;&nbsp;18:23</div>
<svg class="a" style="left:781px;top:620px" width="12" height="12" viewBox="0 0 12 12"><g fill="#c4c4c4"><rect x="9" y="4" width="2" height="2"/><rect x="6" y="7" width="2" height="2"/><rect x="9" y="7" width="2" height="2"/><rect x="3" y="10" width="2" height="2"/><rect x="6" y="10" width="2" height="2"/><rect x="9" y="10" width="2" height="2"/></g></svg>
</body></html>
